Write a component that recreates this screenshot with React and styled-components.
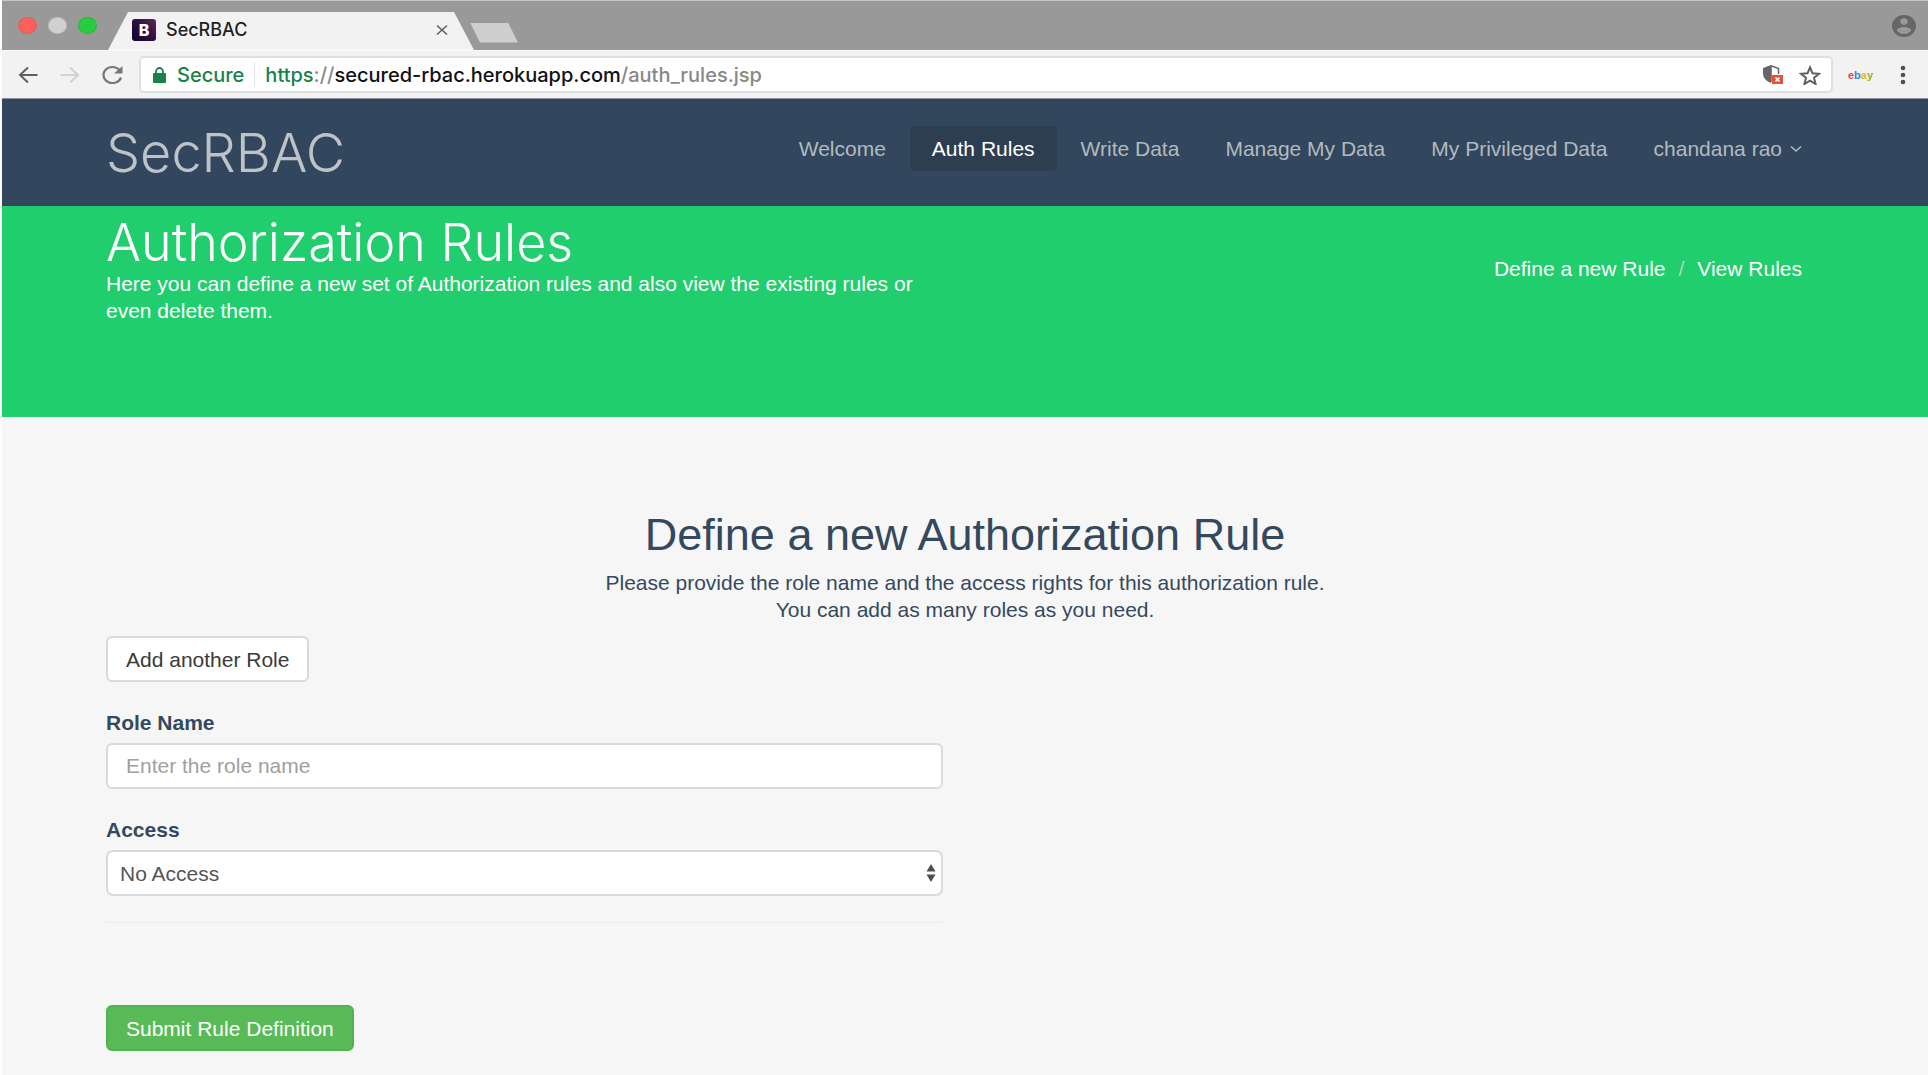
import React from "react";
import styled, { createGlobalStyle } from "styled-components";

const SANS = `"Liberation Sans", Arial, sans-serif`;
const UI = `Inter, "Liberation Sans", sans-serif`;

const GlobalStyle = createGlobalStyle`
  *, *::before, *::after { box-sizing: border-box; }
  body { margin: 0; background: #f6f6f6; font-family: ${SANS}; font-size: 21px; line-height: 27px; color: #34495e; }
  h1, h2, p { margin: 0; font-weight: 400; }
  button, input, select { font: inherit; }
  a { color: inherit; text-decoration: none; }
  svg { display: block; flex: none; }
`;

const Window = styled.div`
  min-height: 100vh;
  border-left: 2px solid #fdfdfd;
`;

/* Browser chrome */
const TabStrip = styled.div`
  display: flex;
  align-items: flex-end;
  height: 50px;
  padding-right: 12px;
  background: #999999;
  border-top: 1px solid #c4c8c6;
`;

const Lights = styled.div`
  display: flex;
  align-self: center;
  gap: 11px;
  padding-left: 16px;
`;

const Light = styled.button`
  width: 19px;
  height: 17px;
  padding: 0;
  border: 1px solid rgba(0, 0, 0, 0.08);
  border-radius: 50%;
  background: ${(p) => p.$color};
`;

const Tab = styled.div`
  display: flex;
  align-items: center;
  gap: 10px;
  width: 366px;
  height: 38px;
  margin-left: 11px;
  padding: 0 26px 2px 24px;
  background: #f2f2f2;
  clip-path: polygon(20px 0, 346px 0, 366px 100%, 0 100%);
`;

const Favicon = styled.span`
  display: grid;
  place-items: center;
  width: 24px;
  height: 22px;
  border-radius: 3px;
  background: linear-gradient(45deg, #14022f, #2b1040 50%, #5a2a55);
  color: #fff;
  font: 800 16px/22px ${UI};
`;

const TabTitle = styled.span`
  flex: 1;
  color: #222;
  font: 500 18px/22px ${UI};
`;

const IconButton = styled.button`
  display: grid;
  place-items: center;
  padding: 0;
  border: 0;
  background: none;
  color: ${(p) => p.$color || "#5f5f5f"};
`;

const NewTab = styled.button`
  align-self: center;
  width: 48px;
  height: 20px;
  margin: 14px auto 0 -4px;
  padding: 0;
  border: 0;
  background: #cecece;
  clip-path: polygon(0 0, 38px 0, 100% 100%, 10px 100%);
`;

const Profile = styled(IconButton)`
  align-self: center;
`;

const Toolbar = styled.div`
  display: flex;
  align-items: center;
  height: 49px;
  padding: 0 22px 0 15px;
  background: #f2f2f2;
  border-top: 1px solid #fafafa;
  border-bottom: 1px solid #8e9196;
`;

const NavIcons = styled.div`
  display: flex;
  gap: 20px;
  padding-right: 15px;
`;

const AddressBar = styled.div`
  display: flex;
  flex: 1;
  align-items: center;
  height: 37px;
  padding: 0 10px 0 12px;
  background: #fff;
  border: 2px solid #e0e0e0;
  border-radius: 5px;
  font: 500 20px/24px ${UI};
`;

const Secure = styled.span`
  padding: 0 10px 0 11px;
  border-right: 1px solid #e4e4e4;
  color: #17824a;
`;

const Url = styled.span`
  flex: 1;
  padding-left: 10px;
  color: #888;
`;

const Scheme = styled.span`
  color: #17824a;
`;

const Domain = styled.span`
  color: #111;
`;

const BarActions = styled.div`
  display: flex;
  gap: 16px;
`;

const Extensions = styled.div`
  display: flex;
  align-items: center;
  gap: 27px;
  padding-left: 15px;
`;

const Ebay = styled(IconButton)`
  display: block;
  font: 700 11px/16px ${SANS};
`;

const Letter = styled.span`
  color: ${(p) => p.$color};
`;

/* Site */
const Container = styled.div`
  max-width: 1718px;
  margin: 0 auto;
`;

const Header = styled.header`
  background: #32475d;
`;

const HeaderRow = styled(Container)`
  display: flex;
  align-items: center;
  justify-content: space-between;
  height: 107px;
  padding-bottom: 8px;
`;

const Brand = styled.a`
  padding-top: 8px;
  color: #bdc3c7;
  font: 300 54px/60px ${UI};
`;

const Nav = styled.nav`
  display: flex;
  gap: 2px;
`;

const NavLink = styled.a`
  display: flex;
  align-items: center;
  gap: 8px;
  padding: 9px 22px;
  border-radius: 5px;
  background: ${(p) => (p.$active ? "#2c3e50" : "transparent")};
  color: ${(p) => (p.$active ? "#fff" : "#b3babf")};
`;

const Banner = styled.section`
  background: #21ce6e;
  color: #fff;
`;

const BannerRow = styled(Container)`
  display: flex;
  align-items: flex-start;
  justify-content: space-between;
  height: 211px;
  padding-top: 9px;
`;

const Half = styled.div`
  width: calc(50% - 22px);
`;

const Title = styled.h1`
  font: 300 52px/55px ${UI};
`;

const Crumbs = styled.nav`
  display: flex;
  gap: 13px;
  padding: 40px 22px 0 0;
`;

const Slash = styled.span`
  color: #a6d9b4;
`;

const Main = styled(Container)`
  padding: 94px 0 20px;
`;

const Intro = styled.div`
  text-align: center;
`;

const Heading = styled.h2`
  margin-bottom: 10px;
  font-size: 45px;
  line-height: 48px;
`;

const Button = styled.button`
  height: 46px;
  padding: 0 18px;
  border: 2px solid ${(p) => (p.$primary ? "#4fb350" : "#d9d9d9")};
  border-radius: 6px;
  background: ${(p) => (p.$primary ? "#59ba58" : "#fff")};
  color: ${(p) => (p.$primary ? "#fff" : "#3a3a3a")};
`;

const Form = styled.form`
  padding-top: 13px;
`;

const Field = styled.div`
  padding-top: 27px;
`;

const Label = styled.label`
  display: block;
  margin-bottom: 7px;
  font-weight: 700;
`;

const Input = styled.input`
  display: block;
  width: 100%;
  height: 46px;
  padding: 0 18px;
  border: 2px solid #d9dada;
  border-radius: 6px;
  background: #fff;
  color: #555;
  &::placeholder { color: #a0a0a0; opacity: 1; }
`;

const SelectWrap = styled.div`
  position: relative;
`;

const Select = styled.select`
  appearance: none;
  display: block;
  width: 100%;
  height: 46px;
  padding: 0 12px;
  border: 2px solid #d9dada;
  border-radius: 7px;
  background: #fff;
  color: #555;
`;

const SelectArrows = styled.svg`
  position: absolute;
  top: 14px;
  right: 7px;
  pointer-events: none;
`;

const Rule = styled.hr`
  margin: 26px 0 82px;
  border: 0;
  border-top: 1px solid #ebebeb;
`;

const navItems = ["Welcome", "Auth Rules", "Write Data", "Manage My Data", "My Privileged Data"];

export default function App() {
  return (
    <Window>
      <GlobalStyle />
      <TabStrip>
        <Lights>
          <Light $color="#fc605b" aria-label="Close window" />
          <Light $color="#d0d0d0" aria-label="Minimize window" />
          <Light $color="#28cc40" aria-label="Zoom window" />
        </Lights>
        <Tab>
          <Favicon>B</Favicon>
          <TabTitle>SecRBAC</TabTitle>
          <IconButton aria-label="Close tab">
            <svg width="12" height="12" viewBox="0 0 12 12" stroke="currentColor" strokeWidth="1.6">
              <path d="M1 1.5 11 10.5M11 1.5 1 10.5" />
            </svg>
          </IconButton>
        </Tab>
        <NewTab aria-label="New tab" />
        <Profile aria-label="Profile" $color="#666">
          <svg width="24" height="22" viewBox="2 2 20 20" preserveAspectRatio="none" fill="currentColor">
            <circle cx="12" cy="12" r="10" />
            <circle cx="12" cy="8" r="3" fill="#999" />
            <path d="M6 16c0-2 4-3.100 6-3.100s6 1.100 6 3.100c-1.300 1.900-3.500 3.200-6 3.200s-4.700-1.300-6-3.200z" fill="#999" />
          </svg>
        </Profile>
      </TabStrip>

      <Toolbar>
        <NavIcons>
          <IconButton aria-label="Back">
            <svg width="22" height="20" viewBox="0 0 22 20" fill="none" stroke="currentColor" strokeWidth="2">
              <path d="M20.500 10H3M11 2.500 3 10l8 7.500" />
            </svg>
          </IconButton>
          <IconButton aria-label="Forward" $color="#d2d2d2">
            <svg width="22" height="20" viewBox="0 0 22 20" fill="none" stroke="currentColor" strokeWidth="2">
              <path d="M1.500 10H19M11 2.500l8 7.500-8 7.500" />
            </svg>
          </IconButton>
          <IconButton aria-label="Reload" $color="#777">
            <svg width="23" height="20" viewBox="0 0 23 20" fill="none" stroke="currentColor" strokeWidth="2.200">
              <path d="M18.500 5A9 8 0 1 0 20 12.500" />
              <path d="M21.500 1v7.500H13z" fill="currentColor" stroke="none" />
            </svg>
          </IconButton>
        </NavIcons>
        <AddressBar>
          <svg width="13" height="16" viewBox="0 0 13 16" fill="#17824a">
            <rect y="6" width="13" height="10" rx="1" />
            <path d="M3 7V4.500a3.500 3.500 0 0 1 7 0V7" fill="none" stroke="#17824a" strokeWidth="1.800" />
          </svg>
          <Secure>Secure</Secure>
          <Url>
            <Scheme>https</Scheme>://<Domain>secured-rbac.herokuapp.com</Domain>/auth_rules.jsp
          </Url>
          <BarActions>
            <IconButton aria-label="Content blocked">
              <svg width="21" height="21" viewBox="0 0 21 21">
                <path d="M9 1 1 4v5c0 5 3.500 8.500 8 10z" fill="#666" />
                <path d="M9 1.700 16.500 4.500V10M9 1.700V18" fill="none" stroke="#666" strokeWidth="1.500" />
                <rect x="10" y="11" width="11" height="9" fill="#ea4f3a" />
                <path d="m13.500 13.500 4 4m0-4-4 4" stroke="#fff" strokeWidth="1.500" />
              </svg>
            </IconButton>
            <IconButton aria-label="Bookmark">
              <svg width="22" height="20" viewBox="1 1 22 21" preserveAspectRatio="none" fill="none" stroke="currentColor" strokeWidth="2">
                <path d="m12 3.500 2.500 6.200 6.500.5-5 4.300 1.600 6.500-5.600-3.500L6.400 21 8 14.500l-5-4.300 6.500-.5z" />
              </svg>
            </IconButton>
          </BarActions>
        </AddressBar>
        <Extensions>
          <Ebay aria-label="ebay">
            <Letter $color="#e8443f">e</Letter>
            <Letter $color="#2f86d6">b</Letter>
            <Letter $color="#f2b01e">a</Letter>
            <Letter $color="#86b817">y</Letter>
          </Ebay>
          <IconButton aria-label="Menu">
            <svg width="6" height="20" viewBox="0 0 6 20" fill="#505050">
              <circle cx="3" cy="3" r="2.300" />
              <circle cx="3" cy="10" r="2.300" />
              <circle cx="3" cy="17" r="2.300" />
            </svg>
          </IconButton>
        </Extensions>
      </Toolbar>

      <Header>
        <HeaderRow>
          <Brand href="#">SecRBAC</Brand>
          <Nav>
            {navItems.map((item) => (
              <NavLink key={item} href="#" $active={item === "Auth Rules"}>
                {item}
              </NavLink>
            ))}
            <NavLink href="#">
              chandana rao
              <svg width="12" height="8" viewBox="0 0 12 8" fill="none" stroke="currentColor" strokeWidth="1.600">
                <path d="m1 1.500 5 4.500 5-4.500" />
              </svg>
            </NavLink>
          </Nav>
        </HeaderRow>
      </Header>

      <Banner>
        <BannerRow>
          <Half>
            <Title>Authorization Rules</Title>
            <p>
              Here you can define a new set of Authorization rules and also view the existing rules or even delete them.
            </p>
          </Half>
          <Crumbs>
            <a href="#define">Define a new Rule</a>
            <Slash>/</Slash>
            <a href="#view">View Rules</a>
          </Crumbs>
        </BannerRow>
      </Banner>

      <Main as="main">
        <Intro>
          <Heading id="define">Define a new Authorization Rule</Heading>
          <p>
            Please provide the role name and the access rights for this authorization rule.
            <br />
            You can add as many roles as you need.
          </p>
        </Intro>
        <Form onSubmit={(e) => e.preventDefault()}>
          <Button type="button">Add another Role</Button>
          <Half>
            <Field>
              <Label htmlFor="role">Role Name</Label>
              <Input id="role" placeholder="Enter the role name" />
            </Field>
            <Field>
              <Label htmlFor="access">Access</Label>
              <SelectWrap>
                <Select id="access" defaultValue="No Access">
                  <option>No Access</option>
                </Select>
                <SelectArrows width="10" height="18" viewBox="0 0 10 18" fill="#505050">
                  <path d="M5 0 9.500 7.500h-9zM5 18 .5 10.500h9z" />
                </SelectArrows>
              </SelectWrap>
            </Field>
            <Rule />
          </Half>
          <Button $primary>Submit Rule Definition</Button>
        </Form>
      </Main>
    </Window>
  );
}
